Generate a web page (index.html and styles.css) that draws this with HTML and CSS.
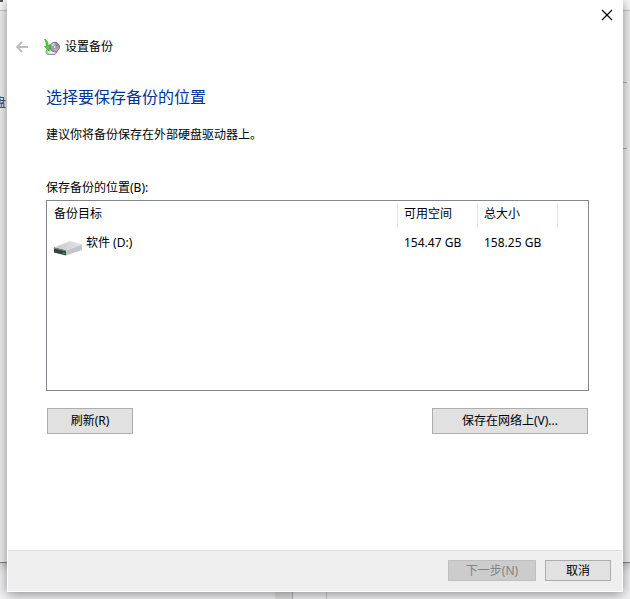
FILE: index.html
```html
<!DOCTYPE html>
<html lang="zh-CN">
<head>
<meta charset="utf-8">
<meta name="viewport" content="width=device-width, initial-scale=1">
<title>设置备份</title>
<link rel="stylesheet" href="styles.css">
</head>
<body>
<div class="desktop">
  <div class="taskbar"><span class="task-segment"></span><span class="task-gap"></span></div>
  <div class="back-window">
    <span class="back-link">盘</span>
    <span class="tick tick-first"></span>
    <span class="tick tick-second"></span>
    <span class="mark"></span>
  </div>
  <main class="dialog">
    <div class="titlebar">
      <button class="close" type="button" aria-label="关闭">
        <svg width="12" height="12" viewBox="0 0 12 12"><path d="M1 1l10 10M11 1L1 11" fill="none" stroke="#000" stroke-width="1.2"/></svg>
      </button>
    </div>
    <header class="wizard-head">
      <button class="back" type="button" aria-label="返回" disabled>
        <svg width="12" height="12" viewBox="0 0 12 12"><path d="M12 6H1M6 1L1 6l5 5" fill="none" stroke="#bcbcbc" stroke-width="1.8"/></svg>
      </button>
      <svg class="app-icon" width="16" height="16" viewBox="0 0 16 16">
        <path d="M2 12l2-3h8l1 4-2 2.500H4L2 14z" fill="#c3c7c7" stroke="#7d8383" stroke-width=".8"/>
        <path d="M4 12.500h7l-.5 2H5z" fill="#f1f3f3"/>
        <circle cx="10.800" cy="8" r="4.700" fill="#a3a3ab" stroke="#66656c" stroke-width=".9"/>
        <path d="M10.800 8L7 6l3-2.300z" fill="#d5d6de"/>
        <path d="M10.800 8l4.300-.8-.6 3z" fill="#ea8a62"/>
        <path d="M10.800 8l2.500 4-3 .3z" fill="#c9a9dd"/>
        <path d="M10.800 8l2-4 2 2z" fill="#7683b0"/>
        <circle cx="10.800" cy="8" r="1.300" fill="#fff" stroke="#777" stroke-width=".6"/>
        <path d="M.5 0C3 1 4.200 3 4.200 7L6 5.500 5 12 .3 7.500l1.700.2C2.300 5 2 2 .5 0z" fill="#49d928" stroke="#259a1c" stroke-width=".6"/>
      </svg>
      <span class="app-name">设置备份</span>
    </header>
    <section class="content">
      <h1>选择要保存备份的位置</h1>
      <p class="advice">建议你将备份保存在外部硬盘驱动器上。</p>
      <p class="list-label" id="target-label">保存备份的位置(B):</p>
      <div class="list">
        <table aria-labelledby="target-label">
          <colgroup><col><col class="size-col"><col class="size-col"><col class="rest-col"></colgroup>
          <thead>
            <tr><th>备份目标</th><th>可用空间</th><th>总大小</th><td></td></tr>
          </thead>
          <tbody>
            <tr>
              <td>
                <div class="drive">
                  <svg width="30" height="16" viewBox="0 0 30 16">
                    <defs>
                      <linearGradient id="drive-top" x1="0" y1="0" x2="1" y2="0"><stop offset="0" stop-color="#c6c7c9"/><stop offset="1" stop-color="#e6e6e8"/></linearGradient>
                    </defs>
                    <path d="M1 7.500L17 1l12 3.500L13 10.500z" fill="url(#drive-top)"/>
                    <path d="M13 10.500l16-6V10l-16 5.500z" fill="#c3c4c8"/>
                    <path d="M1 7.500l12 3v5l-12-3z" fill="#3c3f3f"/>
                    <path d="M1 7.500l12 3v1l-12-3z" fill="#858888"/>
                    <path d="M9.500 12.200l2.500.6v1.500l-2.500-.6z" fill="#28b034"/>
                  </svg>
                  <span>软件 (D:)</span>
                </div>
              </td>
              <td>154.47 GB</td><td>158.25 GB</td><td></td>
            </tr>
          </tbody>
        </table>
      </div>
      <div class="list-actions">
        <button class="btn refresh" type="button">刷新(R)</button>
        <button class="btn network" type="button">保存在网络上(V)...</button>
      </div>
    </section>
    <footer class="footer">
      <button class="btn next" type="button" disabled>下一步(N)</button>
      <button class="btn cancel" type="button">取消</button>
    </footer>
  </main>
</div>
</body>
</html>
```
FILE: styles.css
```css
* { box-sizing: border-box; }

body {
  margin: 0;
  font: 12px/16px "Noto Sans", "Noto Sans CJK SC", sans-serif;
  color: #000;
}

h1, p { margin: 0; }
svg { display: block; }

.desktop {
  position: relative;
  display: flex;
  min-height: 100vh;
  padding: 0 7px 7px;
  background: #f3f3f5;
  overflow: hidden;
}

/* Windows behind the dialog */
.taskbar {
  position: absolute;
  inset: auto 0 0;
  display: flex;
  height: 12px;
  padding-left: 275px;
}
.task-segment { width: 18px; background: #e2e2e2; border-right: 1px solid #b4b4b8; }
.task-gap { width: 34px; border-right: 1px solid #c8c8d0; }

.back-window {
  position: absolute;
  inset: 0 0 36px;
  background: linear-gradient(#fafafa 10px, #c8c8c8 10px, #c8c8c8 11px, #f2f2f2 11px);
  border-bottom: 1px solid #858585;
  box-shadow: 0 2px 10px rgba(0, 0, 0, .3);
}
.back-link { position: absolute; top: 95px; left: -6px; color: #1c3c80; }
.tick { position: absolute; right: 3px; width: 5px; height: 1px; background: #b8b8b8; }
.tick-first { top: 82px; }
.tick-second { top: 148px; }
.mark { position: absolute; top: 0; left: 0; width: 3px; height: 2px; background: #555; }

/* Dialog */
.dialog {
  position: relative;
  display: flex;
  flex: 1;
  flex-direction: column;
  min-width: 0;
  padding: 0 1px 1px;
  background: #fff;
  box-shadow: 0 2px 12px rgba(0, 0, 0, .45);
}

.titlebar { display: flex; justify-content: flex-end; height: 30px; }
.close, .back {
  display: flex;
  align-items: center;
  justify-content: center;
  padding: 0;
  background: none;
  border: 0;
}
.close { width: 30px; }

.wizard-head { display: flex; align-items: center; height: 34px; padding-left: 8px; }
.back { width: 12px; height: 32px; }
.app-icon { margin: 0 5px 0 16px; }

.content { flex: 1; padding: 21px 33px 0 38px; }
h1 { font-size: 16px; line-height: 24px; font-weight: 400; color: #003399; }
.advice { margin-top: 18px; }
.list-label { margin: 37px 0 4px; }

.list { height: 191px; border: 1px solid #828790; }
table { width: 100%; border-collapse: collapse; table-layout: fixed; }
.size-col { width: 80px; }
.rest-col { width: 30px; }
th, td { padding: 0 6px; text-align: left; font-weight: 400; white-space: nowrap; }
thead tr { height: 26px; }
thead th {
  background: linear-gradient(#e5e5e5, #e5e5e5) right bottom / 1px 24px no-repeat;
}
tbody td { padding-top: 8px; vertical-align: top; }
th:first-child { padding-left: 7px; }
td:first-child { padding-left: 6px; }
.drive { display: flex; align-items: flex-start; gap: 3px; }
.drive svg { margin-top: 5px; }

.list-actions {
  display: flex;
  justify-content: space-between;
  padding: 17px 1px 0;
}

.btn {
  height: 26px;
  padding: 0;
  font: inherit;
  color: #000;
  background: #e1e1e1;
  border: 1px solid #adadad;
}
.refresh { width: 86px; }
.network { width: 156px; }

.footer {
  display: flex;
  justify-content: flex-end;
  gap: 9px;
  height: 41px;
  padding: 9px 11px 0;
  background: #efefef;
  border-top: 1px solid #dfdfdf;
}
.footer .btn { height: 21px; }
.next { width: 88px; }
.cancel { width: 66px; }
.btn:disabled { color: #838383; background: #ccc; border-color: #bfbfbf; }
```
